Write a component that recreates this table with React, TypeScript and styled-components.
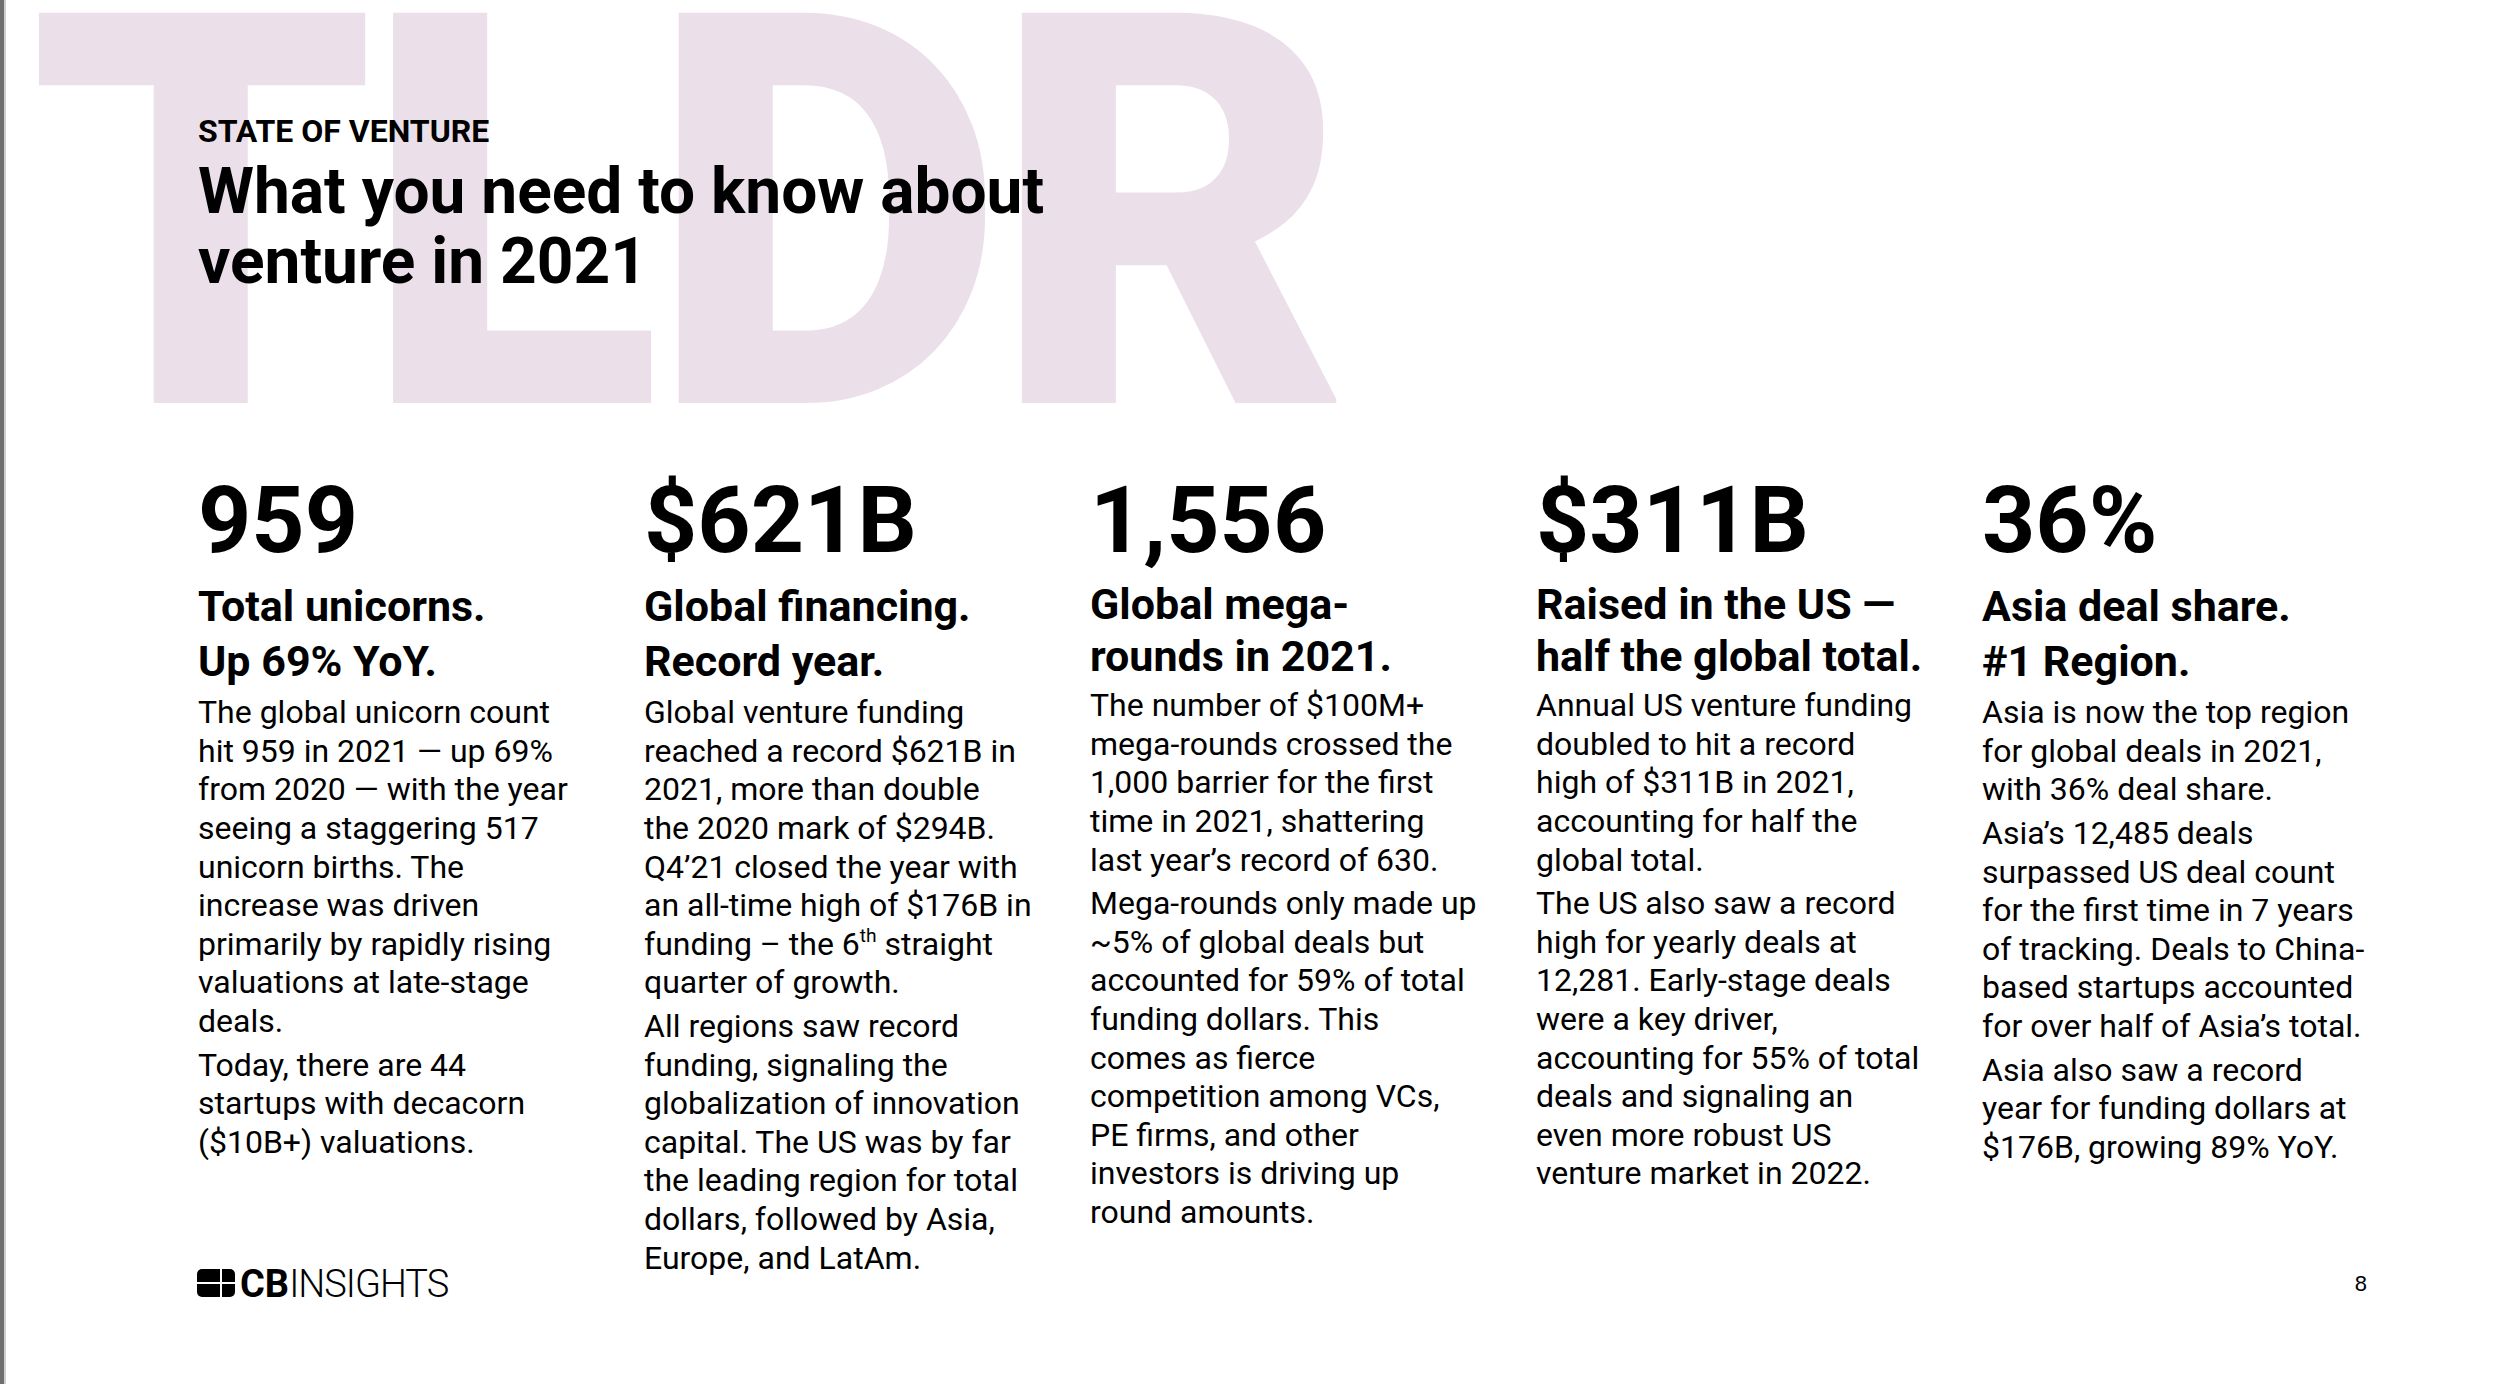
import React from "react";
import styled, { createGlobalStyle } from "styled-components";

const GlobalStyle = createGlobalStyle`
  html, body {
    margin: 0;
    padding: 0;
    background: #ffffff;
  }
  body {
    font-family: Roboto, "Liberation Sans", Arial, sans-serif;
    color: #000000;
  }
`;

const Page = styled.div`
  width: 2500px;
  height: 1384px;
  box-sizing: border-box;
  border-left: 4px solid #6f6f6f;
  box-shadow: inset 2px 0 0 #cfcfcf;
  display: grid;
  grid-template-rows: auto 1fr;
  overflow: hidden;
  background: #ffffff;
`;

const Header = styled.header`
  display: grid;
  grid-template-areas: "stack";
`;

const Watermark = styled.div`
  grid-area: stack;
  margin: -4px 0 0 25px;
  font-size: 549px;
  font-weight: 900;
  line-height: 0.8;
  letter-spacing: -12px;
  color: #ebe0ea;
  white-space: nowrap;
  user-select: none;
`;

const Heading = styled.div`
  grid-area: stack;
  z-index: 1;
  padding: 115px 0 0 194px;
`;

const Kicker = styled.div`
  font-size: 32px;
  font-weight: 700;
  line-height: 32px;
`;

const Title = styled.h1`
  margin: 10px 0 0;
  font-size: 64px;
  font-weight: 700;
  line-height: 70px;
`;

const Stage = styled.main`
  display: grid;
  grid-template-areas: "stack";
`;

const Columns = styled.section`
  grid-area: stack;
  align-self: start;
  display: grid;
  grid-template-columns: repeat(5, 400px);
  column-gap: 46px;
  padding: 36px 0 0 194px;
`;

const Column = styled.article`
  display: flex;
  flex-direction: column;
`;

const Figure = styled.div`
  font-size: 93px;
  font-weight: 700;
  line-height: 100px;
`;

const Subhead = styled.h2<{ $tight?: boolean }>`
  margin: 8px 0 0;
  font-size: 43px;
  font-weight: 700;
  line-height: ${(p) => (p.$tight ? "51.5px" : "55px")};
  white-space: nowrap;
`;

const Body = styled.div`
  margin-top: 4px;
  display: flex;
  flex-direction: column;
  gap: 5px;
`;

const Paragraph = styled.p`
  margin: 0;
  font-size: 32px;
  line-height: 38.6px;
  white-space: nowrap;

  sup {
    font-size: 0.6em;
    line-height: 0;
    vertical-align: 0.7em;
  }
`;

const Footer = styled.footer`
  grid-area: stack;
  align-self: end;
  display: flex;
  justify-content: space-between;
  align-items: flex-end;
  padding: 0 133px 87px 193px;
`;

const Logo = styled.div`
  display: flex;
  align-items: flex-end;
  gap: 5px;
  font-size: 38px;
  line-height: 28px;
`;

const LogoText = styled.span`
  display: inline-block;
  line-height: 28px;
  transform: translateY(1px);
`;

const LogoStrong = styled.span`
  font-weight: 700;
`;

const LogoLight = styled.span`
  font-weight: 300;
  letter-spacing: -1px;
`;

const PageNumber = styled.div`
  font-family: "Liberation Sans", Arial, sans-serif;
  font-size: 22px;
  line-height: 22px;
  margin-bottom: 2px;
`;

type Stat = {
  figure: string;
  head: string[];
  tight?: boolean;
  paragraphs: React.ReactNode[][];
};

const stats: Stat[] = [
  {
    figure: "959",
    head: ["Total unicorns.", "Up 69% YoY."],
    paragraphs: [
      [
        "The global unicorn count",
        "hit 959 in 2021 — up 69%",
        "from 2020 — with the year",
        "seeing a staggering 517",
        "unicorn births. The",
        "increase was driven",
        "primarily by rapidly rising",
        "valuations at late-stage",
        "deals.",
      ],
      ["Today, there are 44", "startups with decacorn", "($10B+) valuations."],
    ],
  },
  {
    figure: "$621B",
    head: ["Global financing.", "Record year."],
    paragraphs: [
      [
        "Global venture funding",
        "reached a record $621B in",
        "2021, more than double",
        "the 2020 mark of $294B.",
        "Q4’21 closed the year with",
        "an all-time high of $176B in",
        <>
          funding – the 6<sup>th</sup> straight
        </>,
        "quarter of growth.",
      ],
      [
        "All regions saw record",
        "funding, signaling the",
        "globalization of innovation",
        "capital. The US was by far",
        "the leading region for total",
        "dollars, followed by Asia,",
        "Europe, and LatAm.",
      ],
    ],
  },
  {
    figure: "1,556",
    head: ["Global mega-", "rounds in 2021."],
    tight: true,
    paragraphs: [
      [
        "The number of $100M+",
        "mega-rounds crossed the",
        "1,000 barrier for the first",
        "time in 2021, shattering",
        "last year’s record of 630.",
      ],
      [
        "Mega-rounds only made up",
        "~5% of global deals but",
        "accounted for 59% of total",
        "funding dollars. This",
        "comes as fierce",
        "competition among VCs,",
        "PE firms, and other",
        "investors is driving up",
        "round amounts.",
      ],
    ],
  },
  {
    figure: "$311B",
    head: ["Raised in the US —", "half the global total."],
    tight: true,
    paragraphs: [
      [
        "Annual US venture funding",
        "doubled to hit a record",
        "high of $311B in 2021,",
        "accounting for half the",
        "global total.",
      ],
      [
        "The US also saw a record",
        "high for yearly deals at",
        "12,281. Early-stage deals",
        "were a key driver,",
        "accounting for 55% of total",
        "deals and signaling an",
        "even more robust US",
        "venture market in 2022.",
      ],
    ],
  },
  {
    figure: "36%",
    head: ["Asia deal share.", "#1 Region."],
    paragraphs: [
      ["Asia is now the top region", "for global deals in 2021,", "with 36% deal share."],
      [
        "Asia’s 12,485 deals",
        "surpassed US deal count",
        "for the first time in 7 years",
        "of tracking. Deals to China-",
        "based startups accounted",
        "for over half of Asia’s total.",
      ],
      ["Asia also saw a record", "year for funding dollars at", "$176B, growing 89% YoY."],
    ],
  },
];

const Lines: React.FC<{ lines: React.ReactNode[] }> = ({ lines }) => (
  <>
    {lines.map((line, i) => (
      <React.Fragment key={i}>
        {i > 0 && <br />}
        {line}
      </React.Fragment>
    ))}
  </>
);

const LogoMark = () => (
  <svg width="38" height="28" viewBox="0 0 38 28">
    <rect x="0" y="0" width="38" height="28" rx="5" fill="#000" />
    <rect x="23" y="0" width="2" height="28" fill="#fff" />
    <rect x="0" y="13" width="38" height="2" fill="#fff" />
  </svg>
);

const App: React.FC = () => (
  <>
    <GlobalStyle />
    <Page>
      <Header>
        <Watermark aria-hidden="true">TLDR</Watermark>
        <Heading>
          <Kicker>STATE OF VENTURE</Kicker>
          <Title>
            What you need to know about
            <br />
            venture in 2021
          </Title>
        </Heading>
      </Header>
      <Stage>
        <Columns>
          {stats.map((s) => (
            <Column key={s.figure}>
              <Figure>{s.figure}</Figure>
              <Subhead $tight={s.tight}>
                <Lines lines={s.head} />
              </Subhead>
              <Body>
                {s.paragraphs.map((p, i) => (
                  <Paragraph key={i}>
                    <Lines lines={p} />
                  </Paragraph>
                ))}
              </Body>
            </Column>
          ))}
        </Columns>
        <Footer>
          <Logo>
            <LogoMark />
            <LogoText>
              <LogoStrong>CB</LogoStrong>
              <LogoLight>INSIGHTS</LogoLight>
            </LogoText>
          </Logo>
          <PageNumber>8</PageNumber>
        </Footer>
      </Stage>
    </Page>
  </>
);

export default App;
